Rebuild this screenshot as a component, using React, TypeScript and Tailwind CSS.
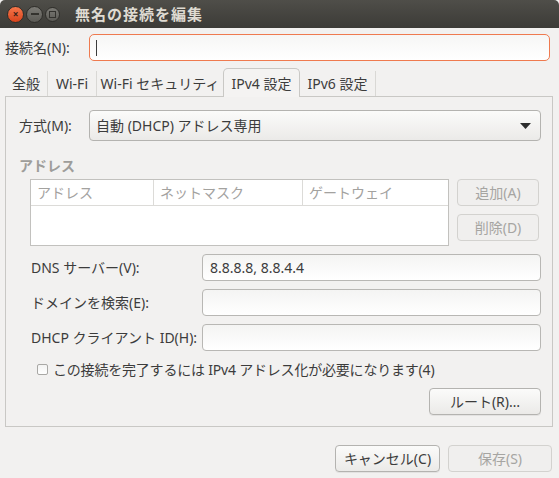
import React from "react";

const font = { fontFamily: '"Noto Sans", "Noto Sans CJK JP", sans-serif' };

function Input({ value, className = "" }: { value?: string; className?: string }) {
  return (
    <div
      className={`h-[26px] rounded-[4px] border border-[#b8b7b4] bg-gradient-to-b from-[#f4f4f3] to-white flex items-center px-[7px] text-[14px] text-[#3c3c3c] ${className}`}
    >
      {value}
    </div>
  );
}

function Btn({ children, disabled, className = "" }: { children: React.ReactNode; disabled?: boolean; className?: string }) {
  return (
    <div
      className={`h-[27px] rounded-[4px] border flex items-center justify-center text-[14px] ${
        disabled
          ? "border-[#d3d2cf] bg-[#f0efee] text-[#a6a5a2]"
          : "border-[#b4b3b0] bg-gradient-to-b from-[#fbfbfa] to-[#ebeae8] text-[#3c3c3c] shadow-[0_1px_0_rgba(0,0,0,0.06)]"
      } ${className}`}
    >
      {children}
    </div>
  );
}

export default function App() {
  return (
    <div className="w-[559px] h-[478px] bg-[#f2f1f0] flex flex-col text-[#3c3c3c]" style={font}>
      {/* Title bar */}
      <div className="h-[28px] shrink-0 rounded-t-[5px] bg-gradient-to-b from-[#4f4e49] to-[#3c3b37] flex items-center pl-[7px]">
        <div className="w-[17px] h-[17px] rounded-full bg-gradient-to-b from-[#f5764a] to-[#d9431a] border border-[#2f2e2a] flex items-center justify-center">
          <span className="text-[10px] leading-none text-[#3a2218] font-bold">×</span>
        </div>
        <div className="ml-[2px] w-[17px] h-[17px] rounded-full bg-gradient-to-b from-[#7b7a75] to-[#5b5a55] border border-[#2f2e2a] flex items-center justify-center">
          <div className="w-[8px] h-[2px] bg-[#33322e]" />
        </div>
        <div className="ml-[2px] w-[15px] h-[15px] rounded-full bg-gradient-to-b from-[#7b7a75] to-[#5b5a55] border border-[#2f2e2a] flex items-center justify-center">
          <div className="w-[7px] h-[7px] border-[1.5px] border-[#33322e]" />
        </div>
        <div className="ml-[15px] text-[15px] font-bold text-[#dfdbd2] tracking-[1px]">無名の接続を編集</div>
      </div>

      {/* Name row */}
      <div className="flex items-center mt-[6px] px-[5px]">
        <div className="w-[84px] text-[14px]">接続名(N):</div>
        <div className="flex-1 ml-0 mr-[4px] h-[27px] rounded-[5px] border border-[#ef7a4f] bg-gradient-to-b from-[#f6f6f5] to-white flex items-center pl-[6px]">
          <div className="w-[1px] h-[16px] bg-[#3c3c3c]" />
        </div>
      </div>

      {/* Tabs */}
      <div className="flex items-end mt-[6px] px-[5px] h-[29px] text-[14px]">
        <div className="h-[25px] w-[43px] flex items-center justify-center border-r border-[#d9d8d5]">全般</div>
        <div className="h-[25px] w-[49px] flex items-center justify-center border-r border-[#d9d8d5]">Wi-Fi</div>
        <div className="h-[25px] w-[126px] flex items-center justify-center whitespace-nowrap">Wi-Fi セキュリティ</div>
        <div className="h-[29px] w-[77px] flex items-center justify-center rounded-t-[5px] border border-b-0 border-[#c9c8c5] bg-[#f4f3f2] relative top-[1px] z-10 whitespace-nowrap">
          IPv4 設定
        </div>
        <div className="h-[25px] w-[76px] flex items-center justify-center border-r border-[#d9d8d5] whitespace-nowrap">IPv6 設定</div>
      </div>

      {/* Panel */}
      <div className="mx-[5px] w-[548px] h-[331px] border border-[#c9c8c5] bg-[#f2f1f0] pl-[13px] pr-[11px] pt-[13px] flex flex-col">
        <div className="flex items-center">
          <div className="w-[70px] text-[14px]">方式(M):</div>
          <div className="flex-1 h-[31px] rounded-[4px] border border-[#b4b3b0] bg-gradient-to-b from-[#fbfbfa] to-[#ebeae8] flex items-center justify-between pl-[6px] pr-[9px] text-[14px]">
            <span>自動 (DHCP) アドレス専用</span>
            <svg width="11" height="6" viewBox="0 0 11 6">
              <path d="M0 0 L11 0 L5.5 6 Z" fill="#2d2d2d" />
            </svg>
          </div>
        </div>

        <div className="mt-[14px] text-[14px] font-bold text-[#9e9d9a]">アドレス</div>

        <div className="flex mt-[3px] ml-[11px]">
          <div className="w-[419px] h-[67px] border border-[#c2c1be] bg-white flex flex-col">
            <div className="h-[26px] flex border-b border-[#dcdbd8] text-[14px] text-[#a3a29f]">
              <div className="w-[123px] pl-[6px] border-r border-[#dcdbd8] flex items-center">アドレス</div>
              <div className="w-[149px] pl-[6px] border-r border-[#dcdbd8] flex items-center">ネットマスク</div>
              <div className="flex-1 pl-[6px] flex items-center">ゲートウェイ</div>
            </div>
          </div>
          <div className="ml-[8px] flex flex-col gap-[8px]">
            <Btn disabled className="w-[82px]">追加(A)</Btn>
            <Btn disabled className="w-[82px]">削除(D)</Btn>
          </div>
        </div>

        <div className="mt-[8px] ml-[12px] flex flex-col gap-[8px]">
          <div className="flex items-center">
            <div className="w-[171px] text-[14px]">DNS サーバー(V):</div>
            <Input value="8.8.8.8, 8.8.4.4" className="flex-1 h-[27px]" />
          </div>
          <div className="flex items-center">
            <div className="w-[171px] text-[14px]">ドメインを検索(E):</div>
            <Input className="flex-1 h-[27px]" />
          </div>
          <div className="flex items-center">
            <div className="w-[171px] text-[14px]">DHCP クライアント ID(H):</div>
            <Input className="flex-1 h-[27px]" />
          </div>
        </div>

        <div className="mt-[8px] ml-[18px] flex items-center text-[14px]">
          <div className="w-[11px] h-[11px] border border-[#a9a8a5] rounded-[2px] bg-gradient-to-b from-[#f3f3f2] to-white" />
          <span className="ml-[5px] tracking-[-0.2px]">この接続を完了するには IPv4 アドレス化が必要になります(4)</span>
        </div>

        <div className="mt-[8px] flex justify-end">
          <Btn className="w-[112px]">ルート(R)…</Btn>
        </div>
      </div>

      {/* Bottom buttons */}
      <div className="flex justify-end gap-[8px] mt-[18px] pr-[7px]">
        <Btn className="w-[105px]">キャンセル(C)</Btn>
        <Btn disabled className="w-[104px]">保存(S)</Btn>
      </div>
    </div>
  );
}
